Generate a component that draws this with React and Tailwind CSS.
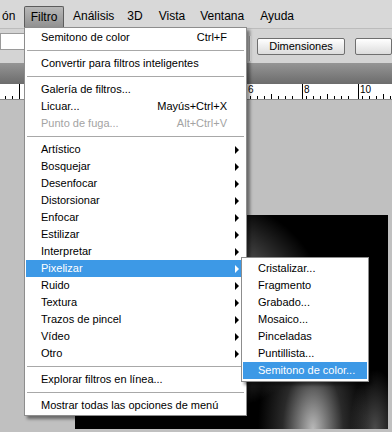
import React from 'react';

const font = "font-['Liberation_Sans',Arial,sans-serif]";

const mainItems = [
  { label: 'Semitono de color', shortcut: 'Ctrl+F' },
  { sep: true },
  { label: 'Convertir para filtros inteligentes' },
  { sep: true },
  { label: 'Galería de filtros...' },
  { label: 'Licuar...', shortcut: 'Mayús+Ctrl+X' },
  { label: 'Punto de fuga...', shortcut: 'Alt+Ctrl+V', disabled: true },
  { sep: true },
  { label: 'Artístico', sub: true },
  { label: 'Bosquejar', sub: true },
  { label: 'Desenfocar', sub: true },
  { label: 'Distorsionar', sub: true },
  { label: 'Enfocar', sub: true },
  { label: 'Estilizar', sub: true },
  { label: 'Interpretar', sub: true },
  { label: 'Pixelizar', sub: true, active: true },
  { label: 'Ruido', sub: true },
  { label: 'Textura', sub: true },
  { label: 'Trazos de pincel', sub: true },
  { label: 'Vídeo', sub: true },
  { label: 'Otro', sub: true },
  { sep: true },
  { label: 'Explorar filtros en línea...' },
  { sep: true },
  { label: 'Mostrar todas las opciones de menú' },
];

const subItems = [
  'Cristalizar...',
  'Fragmento',
  'Grabado...',
  'Mosaico...',
  'Pinceladas',
  'Puntillista...',
  'Semitono de color...',
];

function Arrow({ white }) {
  return (
    <span
      className={
        'w-0 h-0 border-y-[4px] border-y-transparent border-l-[4px] ' +
        (white ? 'border-l-white' : 'border-l-black')
      }
    />
  );
}

function MenuRow({ item }) {
  if (item.sep) {
    return (
      <div className="h-[9px] flex items-center px-[1px]">
        <div className="h-px w-full bg-[#a8a8a8]" />
      </div>
    );
  }
  const color = item.active ? 'bg-[#3d99e6] text-white' : item.disabled ? 'text-[#a3a3a3]' : 'text-black';
  return (
    <div className={`h-[17px] flex items-center pl-[15px] ${color}`}>
      <span>{item.label}</span>
      {item.shortcut && <span className="ml-auto pr-[18px]">{item.shortcut}</span>}
      {item.sub && (
        <span className="ml-auto mr-[6px] flex">
          <Arrow white={item.active} />
        </span>
      )}
    </div>
  );
}

function Ruler() {
  // only the marks right of the open menu carry visible numbers
  const majors = [
    { x: 19 },
    { x: 78 },
    { x: 134 },
    { x: 190 },
    { x: 246, n: '6' },
    { x: 302, n: '8' },
    { x: 358, n: '10' },
  ];
  const ticks = [];
  for (let x = 19 - 56; x < 392; x += 7) {
    const i = Math.round((x - 19) / 7);
    const mod = ((i % 8) + 8) % 8;
    if (mod === 0) continue;
    ticks.push({ x, h: mod === 4 ? 5 : 3 });
  }
  return (
    <svg width="392" height="16" className="block">
      <rect width="392" height="16" fill="#ffffff" />
      <line x1="0" y1="15.5" x2="392" y2="15.5" stroke="#8a8a8a" />
      {ticks.map((t) => (
        <line key={t.x} x1={t.x + 0.5} y1={15 - t.h} x2={t.x + 0.5} y2={15} stroke="#000" />
      ))}
      {majors.map((m) => (
        <g key={m.x}>
          <line x1={m.x + 0.5} y1="0" x2={m.x + 0.5} y2="15" stroke="#000" />
          {m.n && (
            <text x={m.x + 2} y="9" fontSize="10" fontFamily="Liberation Sans, Arial, sans-serif" fill="#000">
              {m.n}
            </text>
          )}
        </g>
      ))}
    </svg>
  );
}

export default function App() {
  return (
    <div className={`relative w-[392px] h-[432px] overflow-hidden bg-[#c0c0c0] ${font} text-[11px]`}>
      {/* Menu bar */}
      <div className="h-[28px] bg-[#d8d8d8] flex items-end text-[12px] text-black">
        <span className="ml-[2px] w-[22px] h-[22px] leading-[21px]">ón</span>
        <span className="w-[40px] h-[22px] leading-[21px] text-center rounded-t-[2px] border border-b-0 border-[#5c5c5c] bg-[linear-gradient(#b8b8b8,#8f8f8f)]">
          Filtro
        </span>
        <span className="ml-[9px] h-[22px] leading-[21px]">Análisis</span>
        <span className="ml-[13px] h-[22px] leading-[21px]">3D</span>
        <span className="ml-[16px] h-[22px] leading-[21px]">Vista</span>
        <span className="ml-[15px] h-[22px] leading-[21px]">Ventana</span>
        <span className="ml-[16px] h-[22px] leading-[21px]">Ayuda</span>
      </div>

      {/* Options bar */}
      <div className="h-[35px] bg-[#d4d4d4] border-t border-[#bcbcbc] flex items-start">
        <div className="w-[250px] mt-[4px]">
          <div className="w-[60px] h-[17px] bg-white border border-[#9a9a9a]" />
        </div>
        <div className="mt-[14px] w-[19px] h-[14px] bg-[linear-gradient(#fafafa,#dcdcdc)] border border-[#8a8a8a] flex items-center justify-center">
          <svg width="9" height="6" viewBox="0 0 9 6">
            <polyline points="1,1 4.5,4.5 8,1" fill="none" stroke="#222" strokeWidth="2" />
          </svg>
        </div>
        <div className="ml-[3px] mt-[7px] h-[25px] flex">
          <div className="w-px bg-[#a6a6a6]" />
          <div className="w-px bg-[#f0f0f0]" />
        </div>
        <div className="ml-[6px] mt-[9px] w-[97px] h-[17px] rounded-[2px] border border-[#6f6f6f] bg-[linear-gradient(#ffffff,#dcdcdc)] flex items-center justify-center text-[11px] text-black">
          Dimensiones
        </div>
        <div className="ml-[10px] mt-[9px] w-[40px] h-[17px] rounded-[2px] border border-[#6f6f6f] bg-[linear-gradient(#ffffff,#dcdcdc)]" />
      </div>

      {/* Tab bar */}
      <div className="h-[21px] bg-[linear-gradient(#959595,#6c6c6c)]" />

      {/* Ruler */}
      <Ruler />

      {/* Canvas */}
      <div className="pt-[115px] pl-[75px]">
        <div className="w-[313px] h-[214px] bg-black bg-[radial-gradient(ellipse_130px_110px_at_120px_90px,rgba(255,255,255,0.9),rgba(255,255,255,0.3)_55%,transparent_100%),radial-gradient(ellipse_55px_115px_at_238px_214px,rgba(205,205,205,0.9),rgba(120,120,120,0.35)_55%,transparent_100%),radial-gradient(ellipse_25px_60px_at_300px_214px,rgba(150,150,150,0.5),transparent_100%)]" />
      </div>

      {/* Filtro dropdown */}
      <div className="absolute left-[24px] top-[27px] w-[223px] bg-white border border-[#8d8d8d] px-[1px] pt-[1px] pb-[1px] shadow-[3px_3px_3px_rgba(0,0,0,0.45)]">
        {mainItems.map((item, i) => (
          <MenuRow key={i} item={item} />
        ))}
      </div>

      {/* Pixelizar submenu */}
      <div className="absolute left-[241px] top-[257px] w-[128px] bg-white border border-[#8d8d8d] p-[1px] py-[2px] shadow-[3px_3px_3px_rgba(0,0,0,0.45)]">
        {subItems.map((label, i) => (
          <div
            key={label}
            className={
              'h-[17px] flex items-center pl-[15px] ' +
              (i === subItems.length - 1 ? 'bg-[#3d99e6] text-white' : 'text-black')
            }
          >
            {label}
          </div>
        ))}
      </div>
    </div>
  );
}
